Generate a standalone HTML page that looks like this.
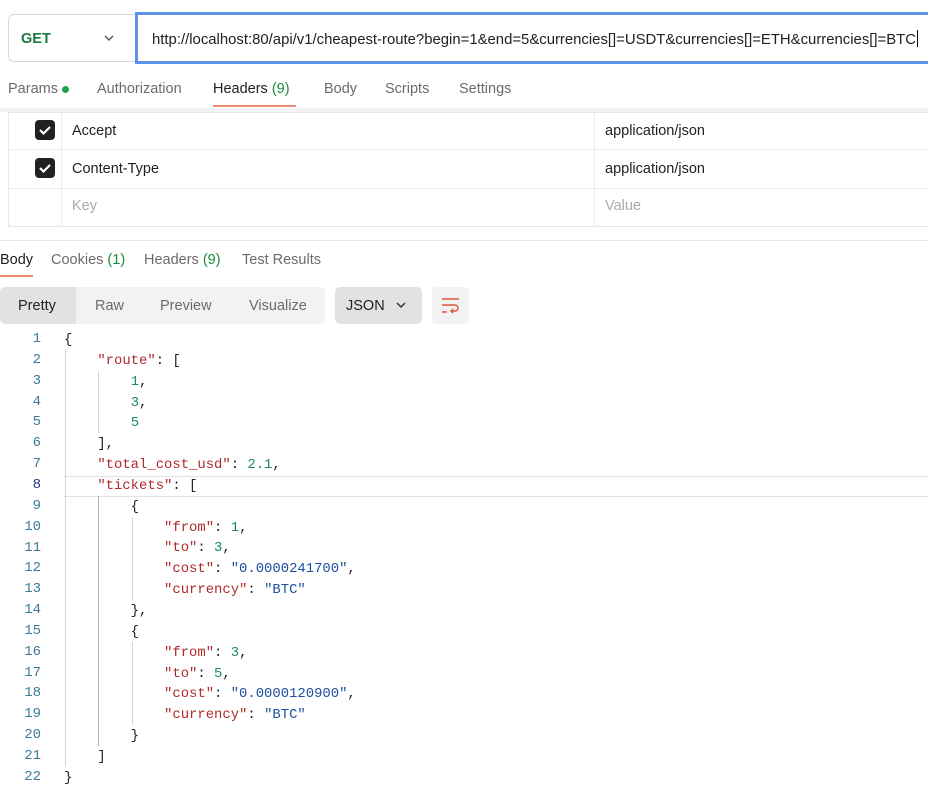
<!DOCTYPE html>
<html><head><meta charset="utf-8"><style>
*{margin:0;padding:0;box-sizing:border-box}
body{width:928px;height:800px;background:#fff;position:relative;overflow:hidden;font-family:"Liberation Sans",sans-serif;color:#212121}
.a{position:absolute;white-space:pre}
.t{font-size:14.5px;color:#6b6b6b}
.code{font-family:"Liberation Mono",monospace;font-size:13.9px}
.ln{position:absolute;width:41px;text-align:right;color:#3c7a9a;font-family:"Liberation Mono",monospace;font-size:14px}
.k{color:#b02a2a}.n{color:#1f8a5a}.s{color:#1f4fa0}.p{color:#212121}
.g{position:absolute;width:1px;background:#d4d4d4}
.cb{position:absolute;left:35px;width:20px;height:20px;background:#212121;border-radius:4px}
</style></head><body>
<div class="a" style="left:8px;top:14px;width:128px;height:48px;border:1px solid #d8d8d8;border-radius:6px 0 0 6px"></div>
<div class="a" style="left:21px;top:31px;font-size:14.5px;font-weight:bold;color:#1b7a3e">GET</div>
<svg class="a" style="left:103px;top:33px" width="12" height="10"><path d="M2 3l4 4 4-4" fill="none" stroke="#555" stroke-width="1.4"/></svg>
<div class="a" style="left:135px;top:12px;width:800px;height:52px;border:3px solid #5a93e8;border-right:none"></div>
<svg class="a" style="left:150px;top:26px" width="775" height="24"><text x="2" y="18" font-family="Liberation Sans" font-size="14.5" fill="#212121" textLength="764" lengthAdjust="spacingAndGlyphs">http://localhost:80/api/v1/cheapest-route?begin=1&amp;end=5&amp;currencies[]=USDT&amp;currencies[]=ETH&amp;currencies[]=BTC</text><rect x="767" y="4" width="1" height="17" fill="#000"/></svg>

<div class="a t" style="left:8px;top:81px">Params</div>
<div class="a" style="left:62px;top:86px;width:7px;height:7px;border-radius:50%;background:#1fa34a"></div>
<div class="a t" style="left:97px;top:81px">Authorization</div>
<div class="a t" style="left:213px;top:81px;color:#212121">Headers <span style="color:#1f8a3e">(9)</span></div>
<div class="a" style="left:213px;top:105px;width:83px;height:2px;background:#f08a70"></div>
<div class="a t" style="left:324px;top:81px">Body</div>
<div class="a t" style="left:385px;top:81px">Scripts</div>
<div class="a t" style="left:459px;top:81px">Settings</div>

<div class="a" style="left:0;top:108px;width:928px;height:4px;background:#f3f3f3"></div>
<div class="a" style="left:8px;top:112px;width:930px;height:115px;border:1px solid #e6e6e6"></div>
<div class="a" style="left:8px;top:149px;width:930px;height:1px;background:#ececec"></div>
<div class="a" style="left:8px;top:188px;width:930px;height:1px;background:#ececec"></div>
<div class="a" style="left:61px;top:112px;width:1px;height:115px;background:#ececec"></div>
<div class="a" style="left:594px;top:112px;width:1px;height:115px;background:#ececec"></div>
<div class="cb" style="top:120px"></div><svg class="a" style="left:35px;top:120px" width="20" height="20"><path d="M5 10l3.5 3.5L15 7" fill="none" stroke="#fff" stroke-width="2.2"/></svg>
<div class="cb" style="top:158px"></div><svg class="a" style="left:35px;top:158px" width="20" height="20"><path d="M5 10l3.5 3.5L15 7" fill="none" stroke="#fff" stroke-width="2.2"/></svg>
<div class="a" style="left:72px;top:123px;font-size:14.5px">Accept</div>
<div class="a" style="left:72px;top:161px;font-size:14.5px">Content-Type</div>
<div class="a" style="left:72px;top:198px;font-size:14.5px;color:#aaa">Key</div>
<div class="a" style="left:605px;top:123px;font-size:14.5px">application/json</div>
<div class="a" style="left:605px;top:161px;font-size:14.5px">application/json</div>
<div class="a" style="left:605px;top:198px;font-size:14.5px;color:#aaa">Value</div>
<div class="a" style="left:0;top:240px;width:928px;height:1px;background:#e6e6e6"></div>

<div class="a t" style="left:0;top:252px;color:#212121">Body</div>
<div class="a" style="left:0;top:275px;width:33px;height:2px;background:#f08a70"></div>
<div class="a t" style="left:51px;top:252px">Cookies <span style="color:#1f8a3e">(1)</span></div>
<div class="a t" style="left:144px;top:252px">Headers <span style="color:#1f8a3e">(9)</span></div>
<div class="a t" style="left:242px;top:252px">Test Results</div>

<div class="a" style="left:0;top:287px;width:325px;height:37px;background:#f2f2f2;border-radius:5px"></div>
<div class="a" style="left:0;top:287px;width:76px;height:37px;background:#e2e2e2;border-radius:5px 0 0 5px"></div>
<div class="a" style="left:18px;top:298px;font-size:14.5px">Pretty</div>
<div class="a t" style="left:95px;top:298px">Raw</div>
<div class="a t" style="left:160px;top:298px">Preview</div>
<div class="a t" style="left:249px;top:298px">Visualize</div>
<div class="a" style="left:335px;top:287px;width:87px;height:37px;background:#e2e2e2;border-radius:5px"></div>
<div class="a" style="left:346px;top:298px;font-size:14.5px">JSON</div>
<svg class="a" style="left:395px;top:300px" width="12" height="10"><path d="M2 3l4 4 4-4" fill="none" stroke="#333" stroke-width="1.5"/></svg>
<div class="a" style="left:432px;top:287px;width:37px;height:37px;background:#f2f2f2;border-radius:5px"></div>
<svg class="a" style="left:432px;top:287px" width="37" height="37"><path d="M10 12h17M10 18h13a3 3 0 0 1 0 6h-4M21 22l-2 2 2 2M10 25h5" fill="none" stroke="#e0563b" stroke-width="1.5"/></svg>

<div class="a" style="left:64px;top:476px;width:864px;height:21px;border-top:1px solid #e2e2e2;border-bottom:1px solid #e2e2e2"></div>
<div class="g" style="left:65px;top:350px;height:417px"></div>
<div class="g" style="left:98px;top:371px;height:62px"></div>
<div class="g" style="left:98px;top:496px;height:250px;background:#b0b0b0"></div>
<div class="g" style="left:132px;top:517px;height:83px"></div>
<div class="g" style="left:132px;top:642px;height:83px"></div>

<div style="position:absolute;left:0;top:331px">
<div class="ln" style="top:0">1</div><div class="ln" style="top:20.85px">2</div><div class="ln" style="top:41.7px">3</div><div class="ln" style="top:62.55px">4</div><div class="ln" style="top:83.4px">5</div><div class="ln" style="top:104.25px">6</div><div class="ln" style="top:125.1px">7</div><div class="ln" style="top:145.95px;color:#1e3a78">8</div><div class="ln" style="top:166.8px">9</div><div class="ln" style="top:187.65px">10</div><div class="ln" style="top:208.5px">11</div><div class="ln" style="top:229.35px">12</div><div class="ln" style="top:250.2px">13</div><div class="ln" style="top:271.05px">14</div><div class="ln" style="top:291.9px">15</div><div class="ln" style="top:312.75px">16</div><div class="ln" style="top:333.6px">17</div><div class="ln" style="top:354.45px">18</div><div class="ln" style="top:375.3px">19</div><div class="ln" style="top:396.15px">20</div><div class="ln" style="top:417px">21</div><div class="ln" style="top:437.85px">22</div>
</div>
<pre class="a code" style="left:64px;top:330px;line-height:20.85px"><span class="p">{</span>
    <span class="k">"route"</span>: [
        <span class="n">1</span>,
        <span class="n">3</span>,
        <span class="n">5</span>
    ],
    <span class="k">"total_cost_usd"</span>: <span class="n">2.1</span>,
    <span class="k">"tickets"</span>: [
        {
            <span class="k">"from"</span>: <span class="n">1</span>,
            <span class="k">"to"</span>: <span class="n">3</span>,
            <span class="k">"cost"</span>: <span class="s">"0.0000241700"</span>,
            <span class="k">"currency"</span>: <span class="s">"BTC"</span>
        },
        {
            <span class="k">"from"</span>: <span class="n">3</span>,
            <span class="k">"to"</span>: <span class="n">5</span>,
            <span class="k">"cost"</span>: <span class="s">"0.0000120900"</span>,
            <span class="k">"currency"</span>: <span class="s">"BTC"</span>
        }
    ]
}</pre>
</body></html>
